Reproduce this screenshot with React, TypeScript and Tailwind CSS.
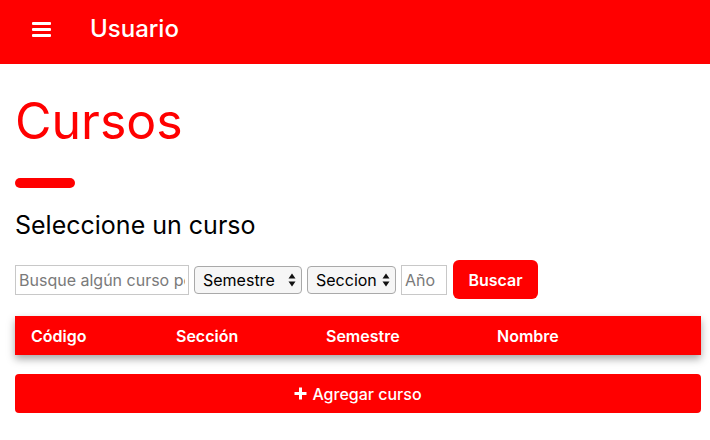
import React from "react";

function DoubleArrow() {
  return (
    <svg width="8" height="14" viewBox="0 0 8 14" className="pointer-events-none">
      <path d="M4 0.5 L7.5 5.5 L0.5 5.5 Z" fill="#111" />
      <path d="M4 13.5 L7.5 8.5 L0.5 8.5 Z" fill="#111" />
    </svg>
  );
}

function FakeSelect({ label, w }: { label: string; w: string }) {
  return (
    <div
      className={`relative flex h-[28px] ${w} items-center rounded-[4px] border border-[#a9a9a9] bg-[#f6f6f6] pl-[8px] text-[16px] text-black`}
    >
      <span>{label}</span>
      <div className="absolute right-[5px] top-[6px]">
        <DoubleArrow />
      </div>
    </div>
  );
}

export default function App() {
  return (
    <div
      className="min-h-[440px] w-[710px] bg-white"
      style={{ fontFamily: "Inter, 'Noto Sans', sans-serif" }}
    >
      <header className="flex h-[64px] items-center bg-[#ff0000] pb-[6px] text-white">
        <div className="ml-[32px] flex w-[19px] flex-col gap-[3px]">
          <div className="h-[3px] rounded-[1px] bg-white" />
          <div className="h-[3px] rounded-[1px] bg-white" />
          <div className="h-[3px] rounded-[1px] bg-white" />
        </div>
        <div className="ml-[39px] text-[24px] font-medium leading-none">Usuario</div>
      </header>

      <main className="pl-[15px] pr-[9px]">
        <h1 className="mt-[32px] text-[50px] font-normal leading-none text-[#ff0000]">Cursos</h1>
        <div className="mt-[32px] h-[10px] w-[60px] rounded-full bg-[#ff0000]" />
        <h2 className="mt-[25px] text-[25px] font-normal leading-none text-black">
          Seleccione un curso
        </h2>

        <div className="mt-[22px] flex h-[39px] items-center">
          <input
            className="h-[30px] w-[174px] border border-[#c8c8c8] px-[3px] text-[16px] text-black outline-none placeholder:text-[#7a7a7a]"
            placeholder="Busque algún curso por nombre"
          />
          <div className="ml-[5px]">
            <FakeSelect label="Semestre" w="w-[108px]" />
          </div>
          <div className="ml-[5px]">
            <FakeSelect label="Seccion" w="w-[89px]" />
          </div>
          <input
            className="ml-[5px] h-[30px] w-[46px] border border-[#c8c8c8] px-[3px] text-[16px] text-black outline-none placeholder:text-[#7a7a7a]"
            placeholder="Año"
          />
          <button className="ml-[6px] h-[39px] w-[85px] rounded-[6px] bg-[#ff0000] text-[16px] font-semibold text-white">
            Buscar
          </button>
        </div>

        <div className="mt-[17px] grid h-[39px] grid-cols-[145px_150px_171px_1fr] items-center bg-[#ff0000] text-[16px] font-semibold text-white shadow-[0_4px_8px_rgba(0,0,0,0.35)]">
          <div className="pl-[16px]">Código</div>
          <div className="pl-[16px]">Sección</div>
          <div className="pl-[16px]">Semestre</div>
          <div className="pl-[16px]">Nombre</div>
        </div>

        <button className="mt-[19px] flex h-[39px] w-full items-center justify-center gap-[5px] rounded-[4px] bg-[#ff0000] text-[16px] font-medium text-white">
          <svg width="13" height="13" viewBox="0 0 13 13">
            <path d="M6.5 0.5 V12.5 M0.5 6.5 H12.5" stroke="white" strokeWidth="3" />
          </svg>
          <span>Agregar curso</span>
        </button>
      </main>
    </div>
  );
}
